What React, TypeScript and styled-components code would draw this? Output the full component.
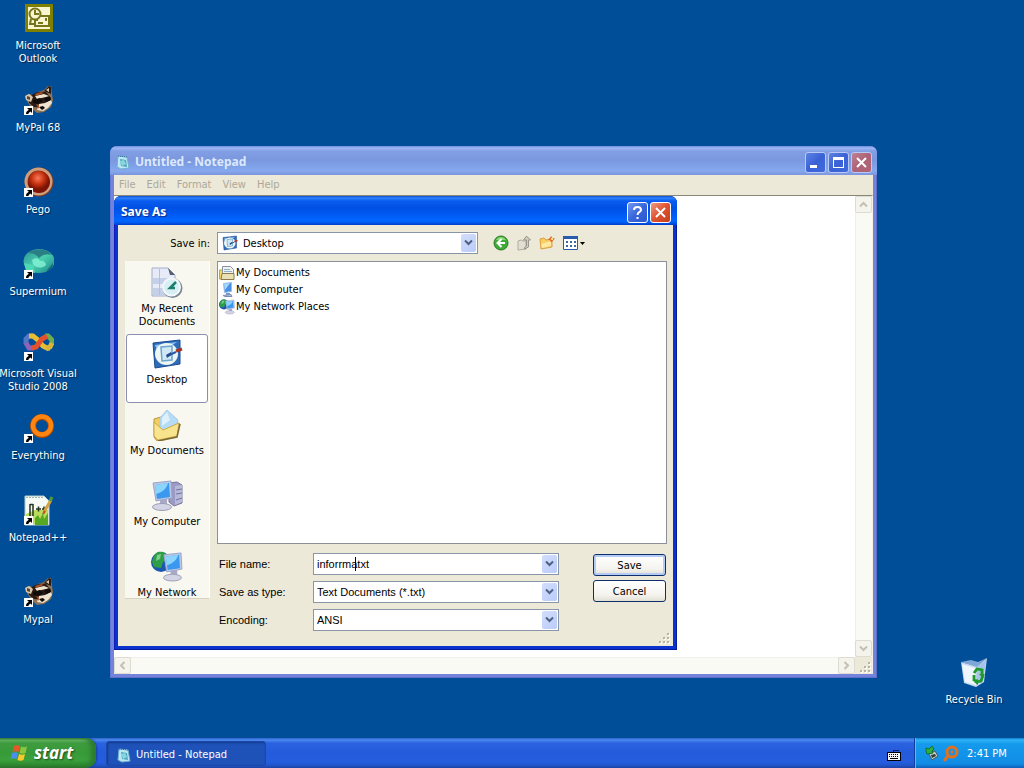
import React from "react";
import styled, { createGlobalStyle, css } from "styled-components";

const uiFont = `"DejaVu Sans Condensed", "DejaVu Sans", Tahoma, sans-serif`;
const formFont = `"Liberation Sans", Arial, sans-serif`;
const captionFont = `"Noto Sans", "Open Sans", sans-serif`;

const GlobalStyle = createGlobalStyle`
  * { box-sizing: border-box; }
  body { margin: 0; font-family: ${uiFont}; font-size: 11px; line-height: 13px; color: #000; }
  button, input, select, textarea { font: inherit; color: inherit; margin: 0; }
  ul { list-style: none; margin: 0; padding: 0; }
  svg { display: block; flex: none; }
`;

const Screen = styled.div`
  display: flex;
  flex-direction: column;
  min-height: 100vh;
  background: #004e98;
`;

const Desktop = styled.main`
  position: relative;
  display: flex;
  flex: 1;
  justify-content: space-between;
  padding: 2px 0 0;
  overflow: hidden;
`;

const IconColumn = styled.div<{ $bottom?: boolean }>`
  display: flex;
  flex-direction: column;
  align-self: ${(p) => (p.$bottom ? "flex-end" : "flex-start")};
  padding: ${(p) => (p.$bottom ? "0 12px 0 0" : "0")};
`;

const Shortcut = styled.button`
  display: flex;
  flex-direction: column;
  align-items: center;
  gap: 5px;
  width: 76px;
  height: 82px;
  padding: 0;
  border: 0;
  background: none;
  color: #fff;
  white-space: pre;
  text-shadow: 1px 1px 1px #00264d;
`;

const Frame = styled.section<{ $active?: boolean }>`
  position: absolute;
  display: flex;
  flex-direction: column;
  border-radius: 7px 7px 0 0;
  background: ${(p) => (p.$active ? "#0a32cf" : "#7582dc")};
  box-shadow: inset -1px -1px 0 ${(p) => (p.$active ? "#001a9a" : "#5f6fc8")},
    inset 1px 0 0 ${(p) => (p.$active ? "#0820b8" : "#6577d4")};
`;

const NotepadFrame = styled(Frame)`
  inset: 146px 147px 60px 110px;
`;

const DialogFrame = styled(Frame)`
  top: 196px;
  left: 114px;
  width: 563px;
  max-width: calc(100% - 114px);
`;

const TitleBar = styled.header<{ $active?: boolean }>`
  display: flex;
  align-items: center;
  gap: 2px;
  height: 29px;
  padding: ${(p) => (p.$active ? "3px 6px 0 5px" : "3px 5px 0")};
  border-radius: 7px 7px 0 0;
  background: ${(p) =>
    p.$active
      ? "linear-gradient(#0a4fd0 0, #2b82fa 2px, #0a5cf0 5px, #0050e2 12px, #0059f2 18px, #0066ff 24px, #0060f6 26px, #003dcc 29px)"
      : "linear-gradient(#6d88dc 0, #9db8f6 2px, #829fe4 5px, #7b98df 14px, #7fa2e8 21px, #86a8ee 25px, #7c94da 29px)"};
`;

const Caption = styled.h1<{ $active?: boolean }>`
  flex: 1;
  margin: 0;
  padding-left: 2px;
  font: bold 12px/16px ${captionFont};
  color: ${(p) => (p.$active ? "#fff" : "#dce8fc")};
  ${(p) => p.$active && css`text-shadow: 1px 1px 1px #0b2a8a;`}
`;

const CaptionButton = styled.button<{ $tone: "blue" | "red" | "paleBlue" | "paleRed" }>`
  display: grid;
  place-items: center;
  width: 21px;
  height: 21px;
  padding: 0;
  border: 1px solid ${(p) => (p.$tone === "blue" || p.$tone === "red" ? "#fff" : "#b9c9f4")};
  border-radius: 3px;
  background: ${(p) =>
    ({
      blue: "linear-gradient(135deg, #6f98f2, #3a66dc 50%, #2a58cf)",
      red: "linear-gradient(135deg, #f09a80, #de5230 50%, #c4401c)",
      paleBlue: "linear-gradient(135deg, #5c82e2, #3a62d6 50%, #3f6ade)",
      paleRed: "linear-gradient(135deg, #bd8194, #ad6377 50%, #b06474)",
    })[p.$tone]};
`;

const WindowBody = styled.div`
  display: flex;
  flex: 1;
  flex-direction: column;
  margin: 0 4px 4px;
  background: #ece9d8;
`;

const MenuBar = styled.nav`
  display: flex;
  gap: 1px;
  height: 20px;
`;

const MenuButton = styled.button`
  padding: 0 5px 2px;
  border: 0;
  background: none;
  color: #aca899;
`;

const Editor = styled.div`
  display: grid;
  flex: 1;
  grid-template: 1fr 17px / 1fr 17px;
  border-top: 1px solid #8a8778;
  border-right: 1px solid #f4f2e8;
`;

const TextArea = styled.textarea`
  width: 100%;
  height: 100%;
  padding: 2px;
  border: 0;
  outline: 0;
  resize: none;
  background: #fff;
`;

const ScrollBar = styled.div<{ $horizontal?: boolean }>`
  display: flex;
  flex-direction: ${(p) => (p.$horizontal ? "row" : "column")};
  justify-content: space-between;
  background: #fafaf5;
  box-shadow: inset 1px 1px 0 #f0efe8;
`;

const ScrollButton = styled.button`
  display: grid;
  place-items: center;
  width: 17px;
  height: 17px;
  padding: 0;
  border: 1px solid #dddcd2;
  border-radius: 2px;
  background: #f4f3ec;
`;

const GripCorner = styled.div`
  display: flex;
  align-items: flex-end;
  justify-content: flex-end;
  background: #ece9d8;
`;

const DialogBody = styled(WindowBody)`
  padding: 7px 2px 1px 7px;
`;

const Toolbar = styled.div`
  display: flex;
  align-items: center;
`;

const SaveInLabel = styled.label`
  width: 92px;
  padding-right: 7px;
  text-align: right;
`;

const Combo = styled.div<{ $look?: boolean }>`
  position: relative;
  display: flex;
  align-items: center;
  gap: ${(p) => (p.$look ? "3px" : "0")};
  width: ${(p) => (p.$look ? "261px" : "100%")};
  height: 22px;
  padding: 1px ${(p) => (p.$look ? "1px 1px 4px" : "1px")};
  border: 1px solid #8795a6;
  background: #fff;
  font-family: ${(p) => (p.$look ? uiFont : formFont)};

  select,
  input {
    flex: 1;
    min-width: 0;
    height: 18px;
    padding: 0 2px;
    border: 0;
    outline: 0;
    appearance: none;
    background: transparent;
  }
`;

const DropArrow = styled.span`
  display: grid;
  place-items: center;
  width: 15px;
  height: 18px;
  border-radius: 2px;
  background: linear-gradient(135deg, #d3defc, #b9cbf8);
`;

const Caret = styled.span`
  position: absolute;
  top: 3px;
  left: 41px;
  width: 1px;
  height: 14px;
  background: #000;
`;

const ToolButtons = styled.div`
  display: flex;
  align-items: center;
  gap: 7px;
  margin-left: 15px;
`;

const ToolButton = styled.button`
  padding: 0;
  border: 0;
  background: none;
`;

const Content = styled.div`
  display: grid;
  grid-template-columns: 85px 1fr;
  gap: 7px;
  align-items: start;
  margin-top: 7px;
  padding-right: 4px;
`;

const Places = styled.nav`
  height: 338px;
  padding: 2px 1px 0;
  overflow: hidden;
  border-right: 1px solid #fff;
  border-bottom: 1px solid #d6d2c2;
  background: #f8f7f0;
`;

const Place = styled.button<{ $selected?: boolean }>`
  display: flex;
  flex-direction: column;
  align-items: center;
  gap: 3px;
  width: 100%;
  height: 69px;
  margin-bottom: 2px;
  padding: 3px 0 0;
  border: 1px solid ${(p) => (p.$selected ? "#8b8fb0" : "transparent")};
  border-radius: 3px;
  background: ${(p) => (p.$selected ? "#fff" : "none")};
  white-space: pre;
`;

const FileList = styled.ul`
  height: 283px;
  padding: 2px 1px;
  border: 1px solid #8c9098;
  background: #fff;
`;

const FileItem = styled.button`
  display: flex;
  align-items: center;
  gap: 1px;
  height: 17px;
  padding: 0;
  border: 0;
  background: none;
`;

const Form = styled.form`
  display: flex;
  justify-content: space-between;
  margin-top: 9px;
  padding: 0 1px 0 2px;
`;

const Fields = styled.div`
  display: grid;
  grid-template-columns: 94px 246px;
  row-gap: 6px;
  align-items: center;
  font-family: ${formFont};
`;

const Actions = styled.div`
  display: flex;
  flex-direction: column;
  gap: 4px;
  padding-top: 1px;
`;

const ActionButton = styled.button<{ $primary?: boolean }>`
  width: 73px;
  height: 22px;
  padding: 0;
  border: 1px solid #0f2f6a;
  border-radius: 3px;
  background: linear-gradient(#fff, #f4f3ee 70%, #e2dfd4);
  ${(p) => p.$primary && css`box-shadow: inset 0 0 0 2px #b4cbf6;`}
`;

const DialogFooter = styled.div`
  display: flex;
  justify-content: flex-end;
  margin-top: 1px;
`;

const Taskbar = styled.footer`
  display: flex;
  height: 30px;
  background: linear-gradient(#2f62c8 0, #4a8af0 2px, #2a62e0 5px, #245bdb 14px, #255ddf 24px, #2156cc 27px, #1c44a4 30px);
  color: #fff;
`;

const StartButton = styled.button`
  display: flex;
  align-items: center;
  gap: 4px;
  width: 96px;
  padding: 0 0 0 10px;
  border: 0;
  border-radius: 0 10px 10px 0;
  background: linear-gradient(#2f7a33 0, #6ab86a 2px, #3f9c40 5px, #379a38 14px, #3aa03c 22px, #2f8a32 27px, #266e28 30px);
  box-shadow: inset -5px 0 5px #2c7a30, 1px 0 2px #173f9c;
  color: #fff;
  font: italic bold 17px/22px ${captionFont};
  text-shadow: 1px 1px 2px #1d4a1e;
`;

const TaskButton = styled.button`
  display: flex;
  align-items: center;
  gap: 4px;
  width: 160px;
  margin: 3px auto 2px 10px;
  padding: 2px 9px 0;
  border: 1px solid #1c46a8;
  border-radius: 3px;
  background: #1e52b9;
  box-shadow: inset 1px 1px 2px #153a8c;
`;

const LanguageBar = styled.button`
  padding: 4px 13px 0;
  border: 0;
  background: none;
`;

const Tray = styled.div`
  display: flex;
  align-items: center;
  gap: 3px;
  width: 110px;
  padding: 0 0 0 9px;
  border-left: 1px solid #0f3f9c;
  background: linear-gradient(#0c7bd0 0, #2fb4f6 2px, #149aec 6px, #1290e8 20px, #118be4 26px, #0c5fb8 30px);
  box-shadow: inset 1px 0 0 #4cc4f8;
`;

const Clock = styled.time`
  margin-left: 5px;
`;

type ArtProps = { size?: number };

const Arrow = () => (
  <g>
    <path fill="#fff" d="M2 22h9v9H2z" />
    <path fill="#000" d="M5 24h5v5L8.500 27.500C7 28.500 6.500 29 6.500 30H4c0-2 1-3 2.800-4.200z" />
  </g>
);

const OutlookIcon = () => (
  <svg width="32" height="32" viewBox="0 0 32 32">
    <path fill="#808000" d="M3 2h28v28H3z" />
    <path fill="#f7f6d0" d="M6 5h22v22H6z" />
    <g fill="none" stroke="#77761a" strokeWidth="2">
      <circle cx="13" cy="12" r="5.500" />
      <path d="M13 8v4h4M9 17l-1 5h5M18 14h9v10H13v-6h3" />
      <path d="M16 21h5M24 16v3" />
    </g>
  </svg>
);

const RaccoonIcon = () => (
  <svg width="32" height="32" viewBox="0 0 32 32">
    <path fill="#8d7358" d="M4 11l4-1 3 2 5-4 6-2 4-4 3 0 1 8 1 6-2 7-7 5-7 1-5-4-5-8z" />
    <path fill="#2a1b14" d="M22 7l5-5 2 1v7zM7 15c3-6 9-8 17-7l5 6-1 6-6 4-10-1-5-4z" />
    <path fill="#d9c8ae" d="M3 12l4-2 4 3-2 5-5-2zM24 6l3-2v4z" />
    <path fill="#5a4634" d="M5 12l3 1v3l-3-1z" />
    <path fill="#f0e4d0" d="M13 12l9-2 5 2-3 1-9 2zM17 20l6-1 6-3 1 3-4 5-5 3-6-1z" />
    <path fill="#100c0b" d="M11 16l7-2 3 3-5 3-5-1zM22 14l6-1 1 3-5 2zM17 23l4-1 2 2-3 2z" />
    <path fill="#a8532c" d="M13 10l6-2 3 1-8 3zM14 20l3 1v4z" />
    <Arrow />
  </svg>
);

const PegoIcon = () => (
  <svg width="32" height="32" viewBox="0 0 32 32">
    <defs>
      <radialGradient id="pego" cx="45%" cy="32%">
        <stop offset="0" stopColor="#f77a58" />
        <stop offset=".6" stopColor="#c5300f" />
        <stop offset="1" stopColor="#7c1505" />
      </radialGradient>
    </defs>
    <circle cx="17" cy="16" r="14.500" fill="#7b3a25" />
    <circle cx="16.500" cy="15.500" r="12.500" fill="none" stroke="#cf9c7c" strokeWidth="3" />
    <circle cx="17" cy="16" r="11" fill="url(#pego)" />
    <Arrow />
  </svg>
);

const SupermiumIcon = () => (
  <svg width="32" height="32" viewBox="0 0 32 32">
    <defs>
      <linearGradient id="superm" x1="0" y1="0" x2="1" y2="1">
        <stop offset="0" stopColor="#2c8f94" />
        <stop offset=".5" stopColor="#49cfae" />
        <stop offset="1" stopColor="#1b8488" />
      </linearGradient>
    </defs>
    <ellipse cx="17" cy="13" rx="15.500" ry="12" fill="url(#superm)" />
    <path fill="#2b7f84" d="M6 5C12 0 25 0 30 7c-6-2-10 0-13 3-3-4-7-5-11-5z" />
    <path fill="#86f2d6" d="M10 12c3-3 7-2 8 1 3-1 6 1 6 4-4 4-11 3-13-1z" opacity=".8" />
    <path fill="#4fd8b4" d="M2 15l9 2 2 8-9-2z" />
    <path fill="#176a78" d="M26 21l5-6c0 4-3 8-7 9z" />
    <Arrow />
  </svg>
);

const VisualStudioIcon = () => (
  <svg width="32" height="32" viewBox="0 0 32 32">
    <g fill="none" strokeWidth="5">
      <path stroke="#5577c4" d="M4 14V9l3-3h4" />
      <path stroke="#e9bd32" d="M7 6h4l5 4 5 6 4 2h3" />
      <path stroke="#6cae4d" d="M23 6h3l4 4v4" />
      <path stroke="#d8b43a" d="M30 13l-2 4-4 2" />
      <path stroke="#8f63b5" d="M4 13l3 5h5" />
      <path stroke="#e3502f" d="M10 18l4-1 6-8 5-3" />
    </g>
    <Arrow />
  </svg>
);

const EverythingIcon = () => (
  <svg width="32" height="32" viewBox="0 0 32 32">
    <circle cx="20" cy="14" r="9" fill="none" stroke="#b34c00" strokeWidth="6" />
    <circle cx="20" cy="13.500" r="9" fill="none" stroke="#ff8410" strokeWidth="4.500" />
    <Arrow />
  </svg>
);

const NotepadPlusIcon = () => (
  <svg width="32" height="32" viewBox="0 0 32 32">
    <path fill="#f6faf4" stroke="#b8c8c4" d="M3 2h19l5 5v24H3z" />
    <path stroke="#9cb8b4" strokeDasharray="2 1" d="M4 3.500h17" />
    <path fill="#b8dc5c" d="M4 20l9-4 13 0v14H4z" />
    <path fill="#57a822" d="M13 24l3-3 2 4 3-6 1 6 4-6v12H13z" />
    <path fill="none" stroke="#26331c" strokeWidth="1.500" d="M8 10v12M11 10v12M8 10.500h3M14 15h5M16.500 12.500v5M20 15h4M22 12.500v5" />
    <path stroke="#d2a23e" strokeWidth="3" d="M22 18l7-12" />
    <path stroke="#4e9b38" strokeWidth="3" d="M28 7l2-4" />
    <path stroke="#d04a28" strokeWidth="2" d="M21 20l2-3" />
    <Arrow />
  </svg>
);

const RecycleIcon = () => (
  <svg width="32" height="32" viewBox="0 0 32 32">
    <path fill="#c6daf0" d="M3 6l16 4 10-8-3 24-8 5-12-4z" />
    <path fill="#7ea6d6" d="M3 6l10-2 7 2 9-4-10 9z" />
    <path fill="#eef5fc" d="M4 8l13 4 1 17-11-3z" />
    <path fill="#a6c4e8" d="M19 11l9-7-3 21-7 4z" />
    <path fill="none" stroke="#1d9a2b" strokeWidth="2.800" d="M16 17l3-4 5 1v4M25 19l-2 6-5 1M16 19v5l3 1" />
    <path fill="#1d9a2b" d="M21 18h6l-3 3zM20 23v6l-4-3z" />
  </svg>
);

const NotepadIcon = ({ size = 16 }: ArtProps) => (
  <svg width={size} height={size} viewBox="0 0 16 16">
    <path fill="#bce6f4" stroke="#6fb0d0" d="M3 2l9 1 2 11-8 1-4-2z" />
    <path fill="#4fa8c0" d="M5 5l6 1 1 7-6-1z" />
    <path fill="#86d6de" d="M5 7l4-1 2 4-4 2z" />
    <path stroke="#2b6f9c" strokeDasharray="1 1" d="M3 2l9 1" />
  </svg>
);

const DesktopIcon = ({ size = 32 }: ArtProps) => (
  <svg width={size} height={size} viewBox="0 0 32 32">
    <path fill="#2f6cb8" stroke="#1c4a90" d="M2 5l27-3v24L4 30z" />
    <path fill="#8cc4f0" d="M4 7l22-3-6 4-14 4z" />
    <ellipse cx="15.500" cy="16" rx="11.500" ry="11" fill="#eef6f4" />
    <path fill="#cfe8f6" stroke="#6fa4cc" strokeWidth="1.500" d="M10 9l11-1v14l-10 1z" />
    <path stroke="#2a5aa0" strokeWidth="2" d="M16 18l9-4" />
    <path fill="#274c90" d="M15 17l5-3v3l-4 3z" />
    <path stroke="#a83428" strokeWidth="3" d="M25 13l6-2" />
  </svg>
);

const RecentIcon = () => (
  <svg width="32" height="32" viewBox="0 0 32 32">
    <path fill="#e6ebf7" stroke="#a4aecb" d="M1 1h16l7 7v21H1z" />
    <path fill="#c4cfe8" d="M2 11h17v6H2zM2 21h12v7H2z" />
    <path fill="#565e70" d="M17 1l7 7h-5z" />
    <path stroke="#b4c0de" d="M8.500 2v26" />
    <circle cx="21.500" cy="21" r="10" fill="#7b8797" />
    <circle cx="20.500" cy="20" r="8.500" fill="#d5eff4" stroke="#f3f7fa" strokeWidth="2" />
    <path fill="none" stroke="#1f7d6e" strokeWidth="2.500" d="M25 15l-6 6h5" />
  </svg>
);

const FolderDocIcon = () => (
  <svg width="32" height="32" viewBox="0 0 32 32">
    <path fill="#f0cf60" stroke="#b89638" d="M3 10l7-2 8 2 11 5-4 13-19 4-3-4z" />
    <path fill="#b5dcf6" stroke="#a9cbe6" d="M16 1l11 10-4 13-14-4V9z" />
    <path fill="#dff1fc" d="M16 3l3 8-8 6V9z" />
    <path fill="#f9e48e" stroke="#cda94a" d="M3 13l9 8 16-7-2 13-19 4-4-4z" />
    <path fill="none" stroke="#7d6a34" strokeWidth="1.500" d="M29 15l-3 13-19 4" />
  </svg>
);

const MonitorArt = () => (
  <g>
    <path fill="#bcc8e4" stroke="#9aa4cc" d="M2 3l18-2 1 17-16 3z" />
    <path fill="#3a98ee" d="M4 5l14-2 1 14-13 2z" />
    <path fill="#8bd4fb" d="M4 5l13-2c-1 5-5 9-12 11z" />
    <path fill="#a7aac6" d="M9 20l7-1v6H9z" />
    <ellipse cx="11" cy="27" rx="9.500" ry="3.500" fill="#d3d4e4" stroke="#9c9db8" />
  </g>
);

const ComputerIcon = ({ size = 32 }: ArtProps) => (
  <svg width={size} height={size} viewBox="0 0 32 32">
    <path fill="#9a9ac4" stroke="#77789f" d="M18 3l8-1 5 3v18l-8 3-5-4z" />
    <path fill="#b8b8d8" d="M24 6l7-1v17l-7 3z" />
    <path stroke="#6e71a4" d="M25 10l6-1M25 14l6-1M25 20l6-2" />
    <MonitorArt />
  </svg>
);

const NetworkIcon = ({ size = 32 }: ArtProps) => (
  <svg width={size} height={size} viewBox="0 0 32 32">
    <circle cx="10" cy="11" r="10" fill="#1c57b0" />
    <path fill="#2f9e48" d="M7 1c6-1 10 2 10 6l-5 4-2 6-7-1-2-5c1-5 3-9 6-10z" />
    <path fill="#7fd08a" d="M6 4l4-1-1 5-4 2z" />
    <g transform="translate(11 1) scale(.95)">
      <MonitorArt />
    </g>
  </svg>
);

const MyDocsSmall = () => (
  <svg width="16" height="16" viewBox="0 0 16 16">
    <path fill="#f3d868" stroke="#c0a548" d="M.5 5h4v9h-4z" />
    <path fill="#eef2f4" stroke="#8a9498" d="M3.500 1.500h8l3 3V12h-11z" />
    <path stroke="#8fb0c8" d="M5 4.500h6M5 6.500h8" />
    <path fill="#e9e0b4" stroke="#8a7c50" d="M2 14.500l1-6h12v6z" />
  </svg>
);

const ComputerSmall = () => (
  <svg width="16" height="16" viewBox="0 0 16 16">
    <path fill="#4a8fe6" stroke="#9cc0ee" d="M4.500 1.500l8-1v9l-7 1z" />
    <path fill="#a6d8fb" d="M5 2l6-1-5 7z" />
    <path fill="#7b9bd0" d="M7 11h4v2H7z" />
    <path fill="#b9c6e4" stroke="#7c8cb4" d="M4 13.500l8-1 1 2H6z" />
  </svg>
);

const BackIcon = () => (
  <svg width="16" height="16" viewBox="0 0 16 16">
    <circle cx="8" cy="8" r="7" fill="#3fab36" stroke="#2b7a2a" />
    <path fill="#8ad872" d="M3 5c2-4 8-4 10 0z" />
    <path fill="none" stroke="#fff" strokeWidth="2" d="M12 8H5M8.500 4L4.500 8l4 4" />
  </svg>
);

const UpIcon = () => (
  <svg width="16" height="16" viewBox="0 0 16 16">
    <path fill="#e2dfd2" stroke="#b0ada0" d="M2 6l3-1 2 1h3v8l-8 1z" />
    <path fill="#cfccbe" stroke="#98958a" d="M10.500 1l4 4h-2v7l-4 2v-1.500l2-1.500V5h-3z" />
  </svg>
);

const NewFolderIcon = () => (
  <svg width="16" height="16" viewBox="0 0 16 16">
    <path fill="#f8cf62" stroke="#dc9e3c" d="M1 4l4-1 2 2 6-1v8l-11 2z" />
    <path fill="#fde9a2" d="M2 9l10-3v5L3 13z" />
    <path fill="#e26a2c" d="M12 1l1.500 2 2.500.5-2 2-1.500 2-1.500-2-2-1.500 2-1z" />
    <path fill="#ffe27a" d="M12 3h2v2h-2z" />
  </svg>
);

const ViewsIcon = () => (
  <svg width="24" height="16" viewBox="0 0 24 16">
    <path fill="#fff" stroke="#2a5cac" d="M1.500 1.500h14v13h-14z" />
    <path fill="#2a5cac" d="M1 1h15v3H1z" />
    <path fill="#3c6c9c" d="M4 6h2v2H4zM8 6h2v2H8zM12 6h2v2h-2zM4 10h2v2H4zM8 10h2v2H8zM12 10h2v2h-2z" />
    <path fill="#000" d="M18 7h5l-2.500 3z" />
  </svg>
);

const FlagIcon = () => (
  <svg width="20" height="20" viewBox="0 0 20 20">
    <path fill="#e8562a" d="M4 3c2-1 4-1 6 0L8.500 9C6.500 8 4.500 8 2.500 9z" />
    <path fill="#8cc63f" d="M11 3.500c2 1 4 1 6 0L15.500 10c-2 1-4 1-6 0z" />
    <path fill="#4a8fea" d="M2 10c2-1 4-1 6 0l-1.500 6c-2-1-4-1-6 0z" />
    <path fill="#fbc926" d="M9 11c2 1 4 1 6 0l-1.500 6c-2 1-4 1-6 0z" />
  </svg>
);

const KeyboardIcon = () => (
  <svg width="14" height="12" viewBox="0 0 14 12">
    <path fill="none" stroke="#0c1c50" d="M6.500 4V1.500H12" />
    <path fill="#000" d="M0 3h14v9H0z" />
    <path fill="#f4f4f4" d="M1 4h12v7H1z" />
    <path stroke="#000" strokeDasharray="1 1" d="M2 5.500h10M2 7.500h10" />
    <path stroke="#000" d="M3 9.500h8" />
  </svg>
);

const SafelyRemoveIcon = () => (
  <svg width="15" height="16" viewBox="0 0 15 16">
    <path fill="#c8cacc" stroke="#4a5860" d="M5 9l6-3 3 5-6 4z" />
    <path fill="#2c4034" d="M7 10l4-1 1 2-4 2z" />
    <path fill="#2fb03c" stroke="#12742a" d="M2 3l3 1 3-3 2 3-2 2 1 2-6 1-1-3z" />
  </svg>
);

const SearchTrayIcon = () => (
  <svg width="17" height="17" viewBox="0 0 17 17">
    <circle cx="10" cy="7" r="5" fill="none" stroke="#e2701c" strokeWidth="3" />
    <circle cx="10" cy="7" r="1.500" fill="#e2701c" />
    <path stroke="#e2701c" strokeWidth="3" d="M6 11l-4 5" />
  </svg>
);

const ScrollArrow = ({ turn }: { turn: number }) => (
  <svg width="9" height="9" viewBox="0 0 9 9">
    <path transform={`rotate(${turn} 4.500 4.500)`} fill="none" stroke="#c3c1b4" strokeWidth="2" d="M1 6.500L4.500 3 8 6.500" />
  </svg>
);

const Grip = () => (
  <svg width="13" height="13" viewBox="0 0 13 13">
    <path fill="#fff" d="M10 2h2v2h-2zM10 6h2v2h-2zM10 10h2v2h-2zM6 6h2v2H6zM6 10h2v2H6zM2 10h2v2H2z" />
    <path fill="#b8b4a2" d="M9 1h2v2H9zM9 5h2v2H9zM9 9h2v2H9zM5 5h2v2H5zM5 9h2v2H5zM1 9h2v2H1z" />
  </svg>
);

const Chevron = () => (
  <DropArrow aria-hidden="true">
    <svg width="9" height="8" viewBox="0 0 9 8">
      <path fill="none" stroke="#4d6185" strokeWidth="2" d="M1 1.500L4.500 5 8 1.500" />
    </svg>
  </DropArrow>
);

const CloseGlyph = () => (
  <svg width="13" height="13" viewBox="0 0 13 13">
    <path stroke="#fff" strokeWidth="2" d="M2 2l9 9M11 2l-9 9" />
  </svg>
);

const shortcuts = [
  { label: "Microsoft\nOutlook", Icon: OutlookIcon },
  { label: "MyPal 68", Icon: RaccoonIcon },
  { label: "Pego", Icon: PegoIcon },
  { label: "Supermium", Icon: SupermiumIcon },
  { label: "Microsoft Visual\nStudio 2008", Icon: VisualStudioIcon },
  { label: "Everything", Icon: EverythingIcon },
  { label: "Notepad++", Icon: NotepadPlusIcon },
  { label: "Mypal", Icon: RaccoonIcon },
];

const places = [
  { label: "My Recent\nDocuments", Icon: RecentIcon },
  { label: "Desktop", Icon: DesktopIcon, selected: true },
  { label: "My Documents", Icon: FolderDocIcon },
  { label: "My Computer", Icon: ComputerIcon },
  { label: "My Network", Icon: NetworkIcon },
];

const NotepadWindow = () => (
  <NotepadFrame aria-label="Untitled - Notepad">
    <TitleBar>
      <NotepadIcon />
      <Caption>Untitled - Notepad</Caption>
      <CaptionButton $tone="paleBlue" aria-label="Minimize">
        <svg width="13" height="13" viewBox="0 0 13 13">
          <path fill="#fff" d="M1 9h7v3H1z" />
        </svg>
      </CaptionButton>
      <CaptionButton $tone="paleBlue" aria-label="Maximize">
        <svg width="13" height="13" viewBox="0 0 13 13">
          <path fill="#fff" fillRule="evenodd" d="M1 1h11v11H1zM2 4v7h9V4z" />
        </svg>
      </CaptionButton>
      <CaptionButton $tone="paleRed" aria-label="Close">
        <CloseGlyph />
      </CaptionButton>
    </TitleBar>
    <WindowBody>
      <MenuBar>
        {["File", "Edit", "Format", "View", "Help"].map((m) => (
          <MenuButton key={m}>{m}</MenuButton>
        ))}
      </MenuBar>
      <Editor>
        <TextArea aria-label="Document text" />
        <ScrollBar>
          <ScrollButton aria-label="Scroll up"><ScrollArrow turn={0} /></ScrollButton>
          <ScrollButton aria-label="Scroll down"><ScrollArrow turn={180} /></ScrollButton>
        </ScrollBar>
        <ScrollBar $horizontal>
          <ScrollButton aria-label="Scroll left"><ScrollArrow turn={270} /></ScrollButton>
          <ScrollButton aria-label="Scroll right"><ScrollArrow turn={90} /></ScrollButton>
        </ScrollBar>
        <GripCorner><Grip /></GripCorner>
      </Editor>
    </WindowBody>
  </NotepadFrame>
);

const SaveAsDialog = () => (
  <DialogFrame $active role="dialog" aria-label="Save As">
    <TitleBar $active>
      <Caption $active>Save As</Caption>
      <CaptionButton $tone="blue" aria-label="Help">
        <svg width="13" height="15" viewBox="0 0 13 15">
          <path fill="none" stroke="#fff" strokeWidth="2" d="M3 5c0-4 7-4 7 0 0 2-3.500 2-3.500 5" />
          <path fill="#fff" d="M5.500 12h2v2h-2z" />
        </svg>
      </CaptionButton>
      <CaptionButton $tone="red" aria-label="Close">
        <CloseGlyph />
      </CaptionButton>
    </TitleBar>
    <DialogBody>
      <Toolbar>
        <SaveInLabel htmlFor="save-in">Save in:</SaveInLabel>
        <Combo $look>
          <DesktopIcon size={16} />
          <select id="save-in" defaultValue="Desktop">
            <option>Desktop</option>
          </select>
          <Chevron />
        </Combo>
        <ToolButtons>
          <ToolButton aria-label="Go to last folder visited"><BackIcon /></ToolButton>
          <ToolButton aria-label="Up one level"><UpIcon /></ToolButton>
          <ToolButton aria-label="Create new folder"><NewFolderIcon /></ToolButton>
          <ToolButton aria-label="View menu"><ViewsIcon /></ToolButton>
        </ToolButtons>
      </Toolbar>
      <Content>
        <Places aria-label="Places">
          {places.map(({ label, Icon, selected }) => (
            <Place key={label} $selected={selected}>
              <Icon />
              {label}
            </Place>
          ))}
        </Places>
        <div>
          <FileList>
            <li><FileItem><MyDocsSmall />My Documents</FileItem></li>
            <li><FileItem><ComputerSmall />My Computer</FileItem></li>
            <li><FileItem><NetworkIcon size={16} />My Network Places</FileItem></li>
          </FileList>
          <Form onSubmit={(e) => e.preventDefault()}>
            <Fields>
              <label htmlFor="file-name">File name:</label>
              <Combo>
                <input id="file-name" type="text" defaultValue="inforrmatxt" />
                <Caret />
                <Chevron />
              </Combo>
              <label htmlFor="file-type">Save as type:</label>
              <Combo>
                <select id="file-type"><option>Text Documents (*.txt)</option></select>
                <Chevron />
              </Combo>
              <label htmlFor="encoding">Encoding:</label>
              <Combo>
                <select id="encoding"><option>ANSI</option></select>
                <Chevron />
              </Combo>
            </Fields>
            <Actions>
              <ActionButton type="submit" $primary>Save</ActionButton>
              <ActionButton type="button">Cancel</ActionButton>
            </Actions>
          </Form>
        </div>
      </Content>
      <DialogFooter><Grip /></DialogFooter>
    </DialogBody>
  </DialogFrame>
);

export default function App() {
  return (
    <Screen>
      <GlobalStyle />
      <Desktop>
        <IconColumn>
          {shortcuts.map(({ label, Icon }) => (
            <Shortcut key={label}>
              <Icon />
              {label}
            </Shortcut>
          ))}
        </IconColumn>
        <IconColumn $bottom>
          <Shortcut>
            <RecycleIcon />
            Recycle Bin
          </Shortcut>
        </IconColumn>
        <NotepadWindow />
        <SaveAsDialog />
      </Desktop>
      <Taskbar>
        <StartButton><FlagIcon />start</StartButton>
        <TaskButton><NotepadIcon />Untitled - Notepad</TaskButton>
        <LanguageBar aria-label="Keyboard"><KeyboardIcon /></LanguageBar>
        <Tray>
          <SafelyRemoveIcon />
          <SearchTrayIcon />
          <Clock>2:41 PM</Clock>
        </Tray>
      </Taskbar>
    </Screen>
  );
}
